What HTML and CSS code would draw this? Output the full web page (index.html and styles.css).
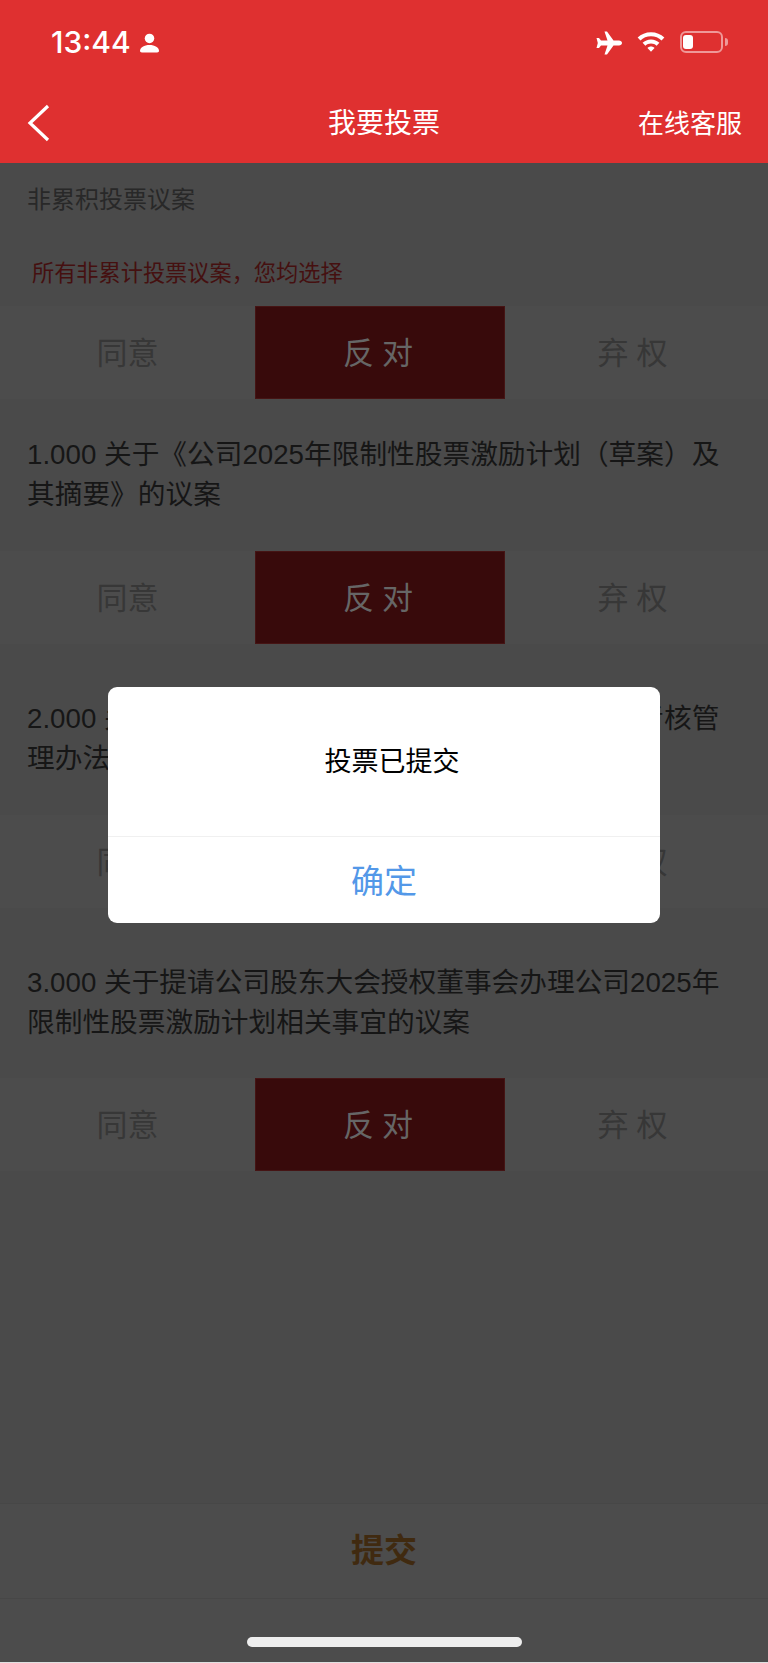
FILE: index.html
```html
<!DOCTYPE html>
<html lang="zh-CN">
<head>
    <meta charset="UTF-8">
    <meta name="viewport" content="width=device-width, initial-scale=1.0">
    <title>我要投票</title>
    <link rel="stylesheet" href="styles.css">
</head>
<body>
    <div class="page">
        <div class="header">
            <div class="status-bar">
                <div class="status-left">
                    <span class="time">13:44</span>
                    <svg class="icon-person" width="19" height="20" viewBox="0 0 20 20"><circle cx="10" cy="5.2" r="5" fill="#fff"/><path d="M2 20c-1.300 0-2-.7-2-1.800 0-3.700 4.400-6.200 10-6.200s10 2.500 10 6.200c0 1.100-.7 1.800-2 1.800z" fill="#fff"/></svg>
                </div>
                <div class="status-right">
                    <svg width="28" height="24" viewBox="0 0 28 24"><path d="M10.500 0.500h2.500l6.500 9h5.500c1.600 0 3 1.100 3 2.500s-1.400 2.500-3 2.500h-5.500l-6.500 9h-2.500l3-9h-6.500l-2 2.600h-2.500l1.300-5.100-1.300-5.100h2.500l2 2.600h6.500z" fill="#fff"/></svg>
                    <svg width="28" height="22" viewBox="0 0 30 22"><path d="M15 0.500c5.600 0 10.600 2.200 14.300 5.700l-3 3.100c-2.900-2.800-6.900-4.500-11.300-4.500s-8.400 1.700-11.300 4.500l-3-3.100c3.700-3.500 8.700-5.700 14.300-5.700z" fill="#fff"/><path d="M15 8.200c3.500 0 6.700 1.400 9 3.600l-3 3.100c-1.500-1.500-3.700-2.400-6-2.400s-4.500.9-6 2.400l-3-3.100c2.300-2.200 5.500-3.600 9-3.600z" fill="#fff"/><path d="M15 15.800c1.500 0 2.800.6 3.800 1.500l-3.800 4.200-3.800-4.200c1-.9 2.300-1.500 3.800-1.500z" fill="#fff"/></svg>
                    <div class="battery"><div class="battery-level"></div></div>
                </div>
            </div>
            <div class="nav-bar">
                <svg class="back" width="24" height="38" viewBox="0 0 24 38"><path d="M22 2L4 19l18 17" fill="none" stroke="#fff" stroke-width="3.200"/></svg>
                <div class="nav-title">我要投票</div>
                <div class="nav-service">在线客服</div>
            </div>
        </div>

        <div class="content">
            <div class="section-title">非累积投票议案</div>
            <div class="all-tip">所有非累计投票议案，您均选择</div>
            <div class="vote-row">
                <div class="vote-btn">同意</div>
                <div class="vote-btn selected spaced">反对</div>
                <div class="vote-btn spaced">弃权</div>
            </div>

            <div class="question first">1.000 关于《公司2025年限制性股票激励计划（草案）及其摘要》的议案</div>
            <div class="vote-row">
                <div class="vote-btn">同意</div>
                <div class="vote-btn selected spaced">反对</div>
                <div class="vote-btn spaced">弃权</div>
            </div>

            <div class="question">2.000 关于《公司2025年限制性股票激励计划实施考核管理办法》的议案</div>
            <div class="vote-row">
                <div class="vote-btn">同意</div>
                <div class="vote-btn selected spaced">反对</div>
                <div class="vote-btn spaced">弃权</div>
            </div>

            <div class="question">3.000 关于提请公司股东大会授权董事会办理公司2025年限制性股票激励计划相关事宜的议案</div>
            <div class="vote-row">
                <div class="vote-btn">同意</div>
                <div class="vote-btn selected spaced">反对</div>
                <div class="vote-btn spaced">弃权</div>
            </div>
        </div>

        <div class="footer">
            <div class="submit">提交</div>
            <div class="home-area"><div class="home-bar"></div></div>
        </div>

        <div class="dialog">
            <div class="dialog-msg">投票已提交</div>
            <div class="dialog-ok">确定</div>
        </div>
    </div>
</body>
</html>
```

FILE: styles.css
```css
* {
    box-sizing: border-box;
}
body {
    margin: 0;
    font-family: "Liberation Sans", "Noto Sans CJK SC", sans-serif;
    background: #4a4a4a;
}
.page {
    position: relative;
    width: 768px;
    height: 1663px;
    display: flex;
    flex-direction: column;
    overflow: hidden;
    border-bottom: 1px solid #e0e0e0;
}
.header {
    height: 163px;
    background-color: #df3030;
    color: #fff;
}
.status-bar {
    height: 80px;
    display: flex;
    justify-content: space-between;
    padding: 24px 45px 0 51px;
}
.status-left {
    display: flex;
    align-items: flex-start;
    gap: 9px;
}
.time {
    font-family: Inter, sans-serif;
    font-size: 30px;
    font-weight: 500;
    line-height: 36px;
}
.icon-person {
    margin-top: 9px;
}
.status-right {
    display: flex;
    align-items: flex-start;
    gap: 15px;
    padding-top: 7px;
}
.battery {
    position: relative;
    width: 43px;
    height: 22px;
    padding: 2px 1px;
    border: 2px solid rgba(255, 255, 255, 0.5);
    border-radius: 6px;
}
.battery::after {
    content: "";
    position: absolute;
    right: -7px;
    top: 5px;
    width: 3px;
    height: 8px;
    background: rgba(255, 255, 255, 0.5);
    border-radius: 0 3px 3px 0;
}
.battery-level {
    width: 10px;
    height: 100%;
    background: #fff;
    border-radius: 3px;
}
.nav-bar {
    height: 83px;
    display: flex;
    align-items: center;
    position: relative;
    padding: 0 26px 1px 26px;
    justify-content: space-between;
}
.back {
    margin-top: 3px;
}
.nav-title {
    position: absolute;
    left: 0;
    right: 0;
    text-align: center;
    font-size: 28px;
}
.nav-service {
    font-size: 26px;
}
.content {
    flex: 1;
    background: #4a4a4a;
}
.section-title {
    padding: 22px 27px 0;
    height: 70px;
    font-size: 24px;
    line-height: 30px;
    color: #282828;
}
.all-tip {
    padding: 26px 32px 0;
    height: 73px;
    font-size: 22.200px;
    line-height: 30px;
    color: #451010;
}
.vote-row {
    height: 93px;
    display: grid;
    grid-template-columns: 255px 250px 263px;
    background: #4c4c4c;
}
.vote-btn {
    display: flex;
    align-items: center;
    justify-content: center;
    padding-bottom: 4px;
    font-size: 31px;
    color: #373737;
}
.spaced {
    letter-spacing: 8px;
}
.selected {
    background-color: #380a0b;
    color: #666;
    border: 1px solid #451414;
    padding-left: 4px;
}
.question {
    padding: 55px 30px 0 27px;
    height: 170.500px;
    font-size: 27.700px;
    line-height: 40px;
    color: #161616;
    background: #4a4a4a;
}
.question.first {
    padding-top: 36px;
    height: 152px;
}
.footer {
    height: 159px;
    background: #4c4c4c;
}
.submit {
    height: 96px;
    display: flex;
    align-items: center;
    justify-content: center;
    padding-bottom: 6px;
    font-size: 33px;
    font-weight: 700;
    color: #402a10;
    border-top: 1px solid #474747;
    border-bottom: 1px solid #474747;
}
.home-area {
    padding-top: 38px;
    display: flex;
    justify-content: center;
}
.home-bar {
    width: 275px;
    height: 10px;
    background: #eeeeee;
    border-radius: 5px;
}
.dialog {
    position: absolute;
    left: 108px;
    top: 687px;
    width: 552px;
    height: 236px;
    background: #fff;
    border-radius: 9px;
    display: flex;
    flex-direction: column;
}
.dialog-msg {
    height: 150px;
    padding: 57px 0 0 16px;
    text-align: center;
    font-size: 27px;
    line-height: 36px;
    color: #000;
    border-bottom: 1px solid #f0f0f0;
}
.dialog-ok {
    flex: 1;
    display: flex;
    align-items: center;
    justify-content: center;
    padding-bottom: 3px;
    font-size: 33px;
    color: #5398e8;
}
```
